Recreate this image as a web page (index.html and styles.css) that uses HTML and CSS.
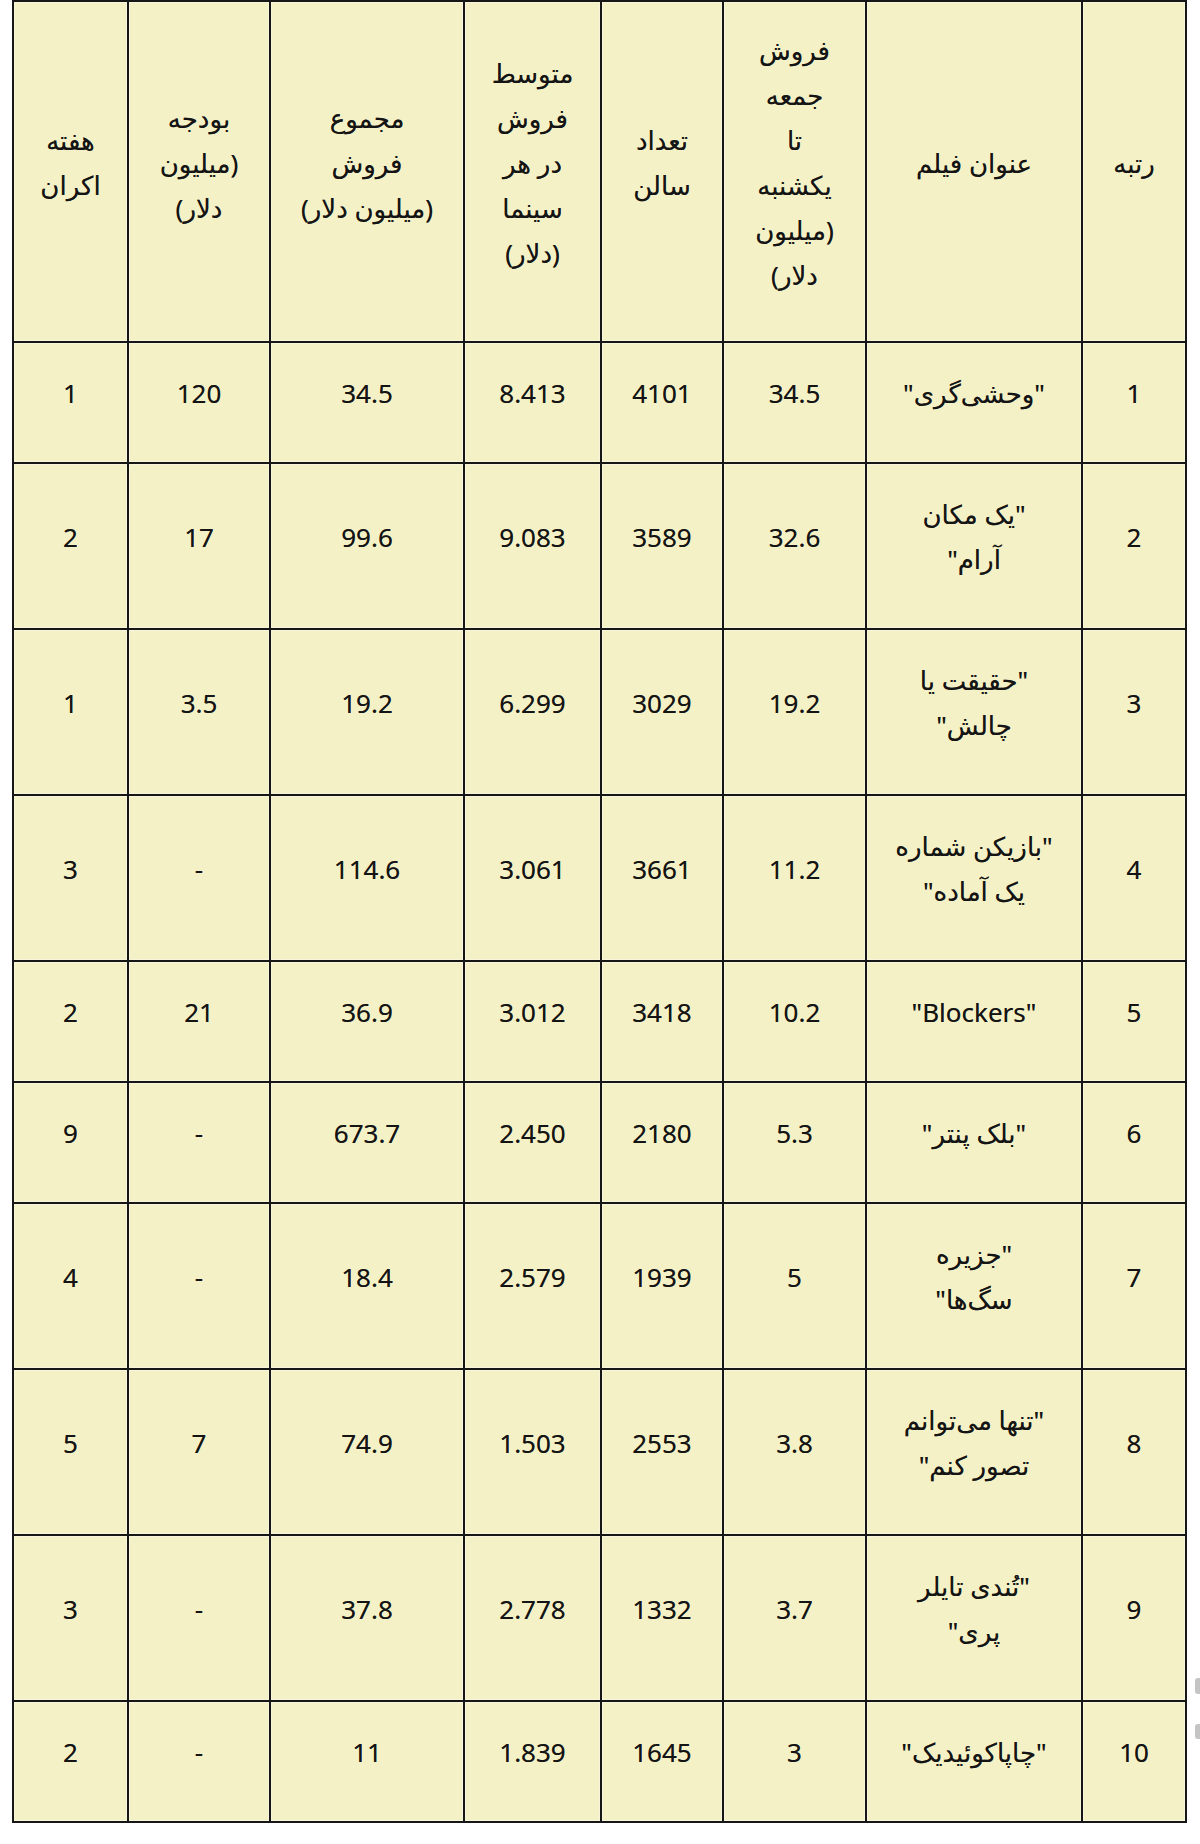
FILE: index.html
```html
<!DOCTYPE html>
<html lang="fa" dir="rtl">
<head>
<meta charset="utf-8">
<title>جدول فروش فیلم‌ها</title>
<link rel="stylesheet" href="styles.css">
</head>
<body>
<table class="box-office">
  <colgroup>
    <col class="col-rank">
    <col class="col-title">
    <col class="col-weekend">
    <col class="col-theaters">
    <col class="col-avg">
    <col class="col-total">
    <col class="col-budget">
    <col class="col-weeks">
  </colgroup>
  <thead>
    <tr>
      <th>رتبه</th>
      <th>عنوان فیلم</th>
      <th>فروش<br>جمعه<br>تا<br>یکشنبه<br>(میلیون<br>دلار)</th>
      <th>تعداد<br>سالن</th>
      <th>متوسط<br>فروش<br>در هر<br>سینما<br>(دلار)</th>
      <th>مجموع<br>فروش<br>(میلیون دلار)</th>
      <th>بودجه<br>(میلیون<br>دلار)</th>
      <th>هفته<br>اکران</th>
    </tr>
  </thead>
  <tbody>
    <tr><td>1</td><td>"وحشی‌گری"</td><td>34.5</td><td>4101</td><td>8.413</td><td>34.5</td><td>120</td><td>1</td></tr>
    <tr><td>2</td><td>"یک مکان<br>آرام"</td><td>32.6</td><td>3589</td><td>9.083</td><td>99.6</td><td>17</td><td>2</td></tr>
    <tr><td>3</td><td>"حقیقت یا<br>چالش"</td><td>19.2</td><td>3029</td><td>6.299</td><td>19.2</td><td>3.5</td><td>1</td></tr>
    <tr><td>4</td><td>"بازیکن شماره<br>یک آماده"</td><td>11.2</td><td>3661</td><td>3.061</td><td>114.6</td><td>-</td><td>3</td></tr>
    <tr><td>5</td><td>"Blockers"</td><td>10.2</td><td>3418</td><td>3.012</td><td>36.9</td><td>21</td><td>2</td></tr>
    <tr><td>6</td><td>"بلک پنتر"</td><td>5.3</td><td>2180</td><td>2.450</td><td>673.7</td><td>-</td><td>9</td></tr>
    <tr><td>7</td><td>"جزیره<br>سگ‌ها"</td><td>5</td><td>1939</td><td>2.579</td><td>18.4</td><td>-</td><td>4</td></tr>
    <tr><td>8</td><td>"تنها می‌توانم<br>تصور کنم"</td><td>3.8</td><td>2553</td><td>1.503</td><td>74.9</td><td>7</td><td>5</td></tr>
    <tr><td>9</td><td>"تُندی تایلر<br>پری"</td><td>3.7</td><td>1332</td><td>2.778</td><td>37.8</td><td>-</td><td>3</td></tr>
    <tr><td>10</td><td>"چاپاکوئیدیک"</td><td>3</td><td>1645</td><td>1.839</td><td>11</td><td>-</td><td>2</td></tr>
  </tbody>
</table>
<div class="edge-marks" aria-hidden="true">
  <span class="edge-mark"></span>
  <span class="edge-mark edge-mark-low"></span>
</div>
</body>
</html>
```

FILE: styles.css
```css
html, body {
  margin: 0;
  padding: 0;
  background: #ffffff;
}

body {
  position: relative;
  width: 1200px;
  min-height: 1844px;
  font-family: "Noto Sans", "DejaVu Sans", sans-serif;
  color: #141414;
}

.box-office {
  direction: rtl;
  border-collapse: collapse;
  table-layout: fixed;
  width: 1175px;
  margin: 0 13px 0 0;
  background: #f4f1c6;
  font-size: 26px;
  line-height: 45px;
}

.col-rank { width: 104px; }
.col-title { width: 216px; }
.col-weekend { width: 143px; }
.col-theaters { width: 122px; }
.col-avg { width: 137px; }
.col-total { width: 194px; }
.col-budget { width: 142px; }
.col-weeks { width: 115px; }

.box-office th,
.box-office td {
  border: 2px solid #161616;
  text-align: center;
  vertical-align: middle;
  font-weight: normal;
  padding: 28px 4px 46px;
  box-shadow: inset 0 0 0 1px rgba(255, 255, 255, 0.35);
  text-shadow: 0 0 0.4px rgba(20, 20, 20, 0.6);
}

.box-office th {
  padding: 26px 4px 43px;
}

.edge-marks {
  position: absolute;
  right: 0;
  top: 1678px;
  width: 5px;
  height: 70px;
  display: flex;
  flex-direction: column;
  gap: 30px;
}

.edge-mark {
  display: block;
  width: 5px;
  height: 16px;
  background: #c4c4c4;
  border-radius: 3px 0 0 3px;
}

.edge-mark-low {
  height: 15px;
}
```
